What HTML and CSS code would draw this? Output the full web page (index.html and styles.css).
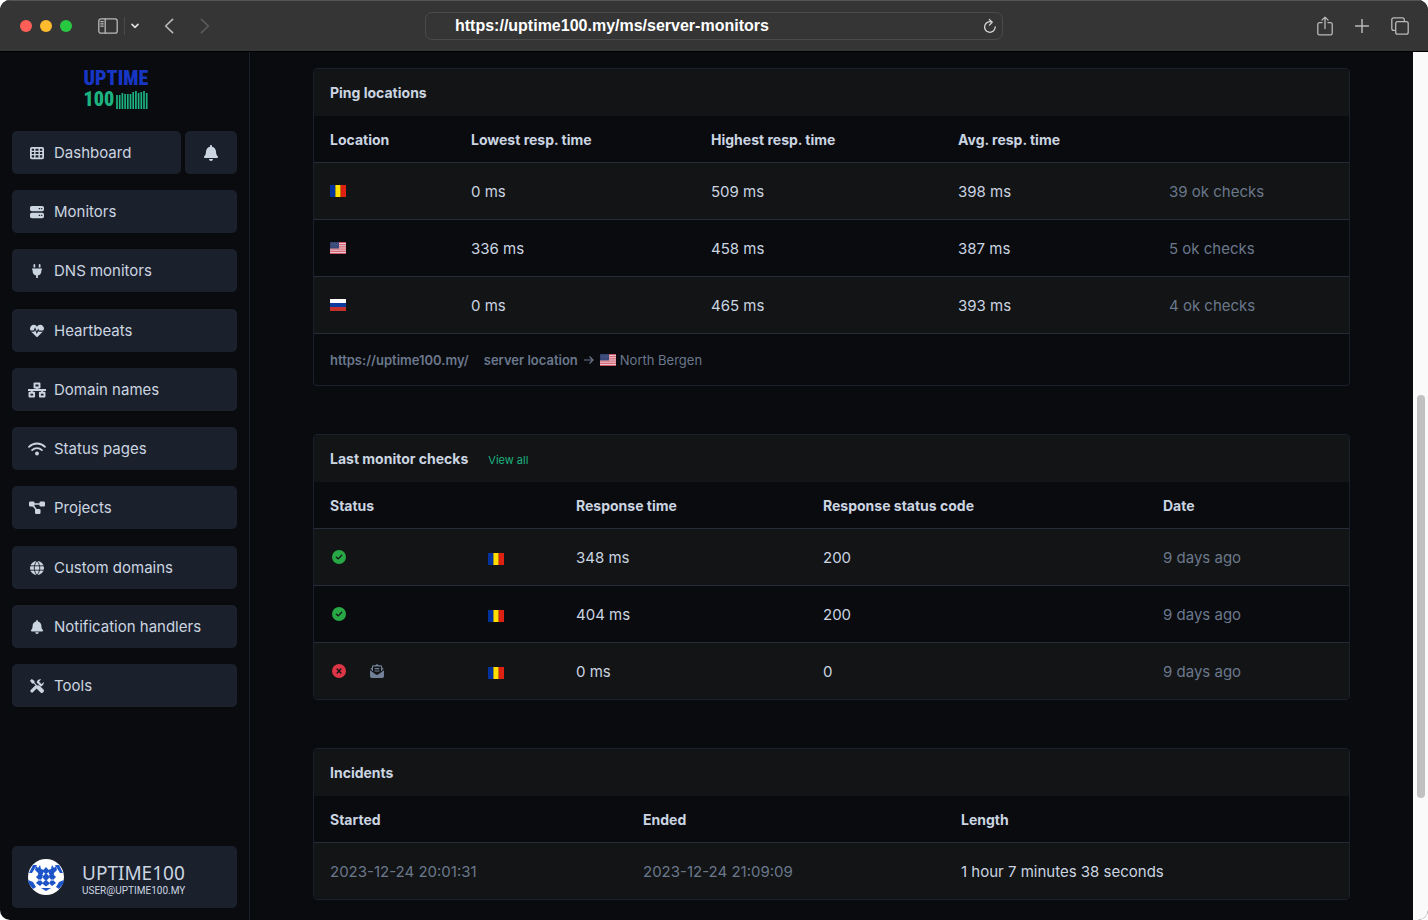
FILE: index.html
```html
<!DOCTYPE html>
<html lang="en">
<head>
  <meta charset="utf-8">
  <meta name="viewport" content="width=device-width, initial-scale=1">
  <title>Server monitors - Uptime100</title>
  <link rel="stylesheet" href="styles.css">
</head>
<body>

<!-- shared shapes -->
<svg class="defs" aria-hidden="true">
  <symbol id="bell" viewBox="0 0 448 512"><path d="M224 512c35.32 0 63.97-28.65 63.97-64H160.03c0 35.35 28.65 64 63.97 64zm215.39-149.71c-19.32-20.76-55.47-51.99-55.47-154.29 0-77.7-54.48-139.9-127.94-155.16V32c0-17.67-14.32-32-31.98-32s-31.98 14.33-31.98 32v20.84C118.56 68.1 64.08 130.3 64.08 208c0 102.3-36.15 133.53-55.47 154.29-6 6.45-8.66 14.16-8.61 21.71.11 16.4 12.98 32 32.1 32h383.8c19.12 0 32-15.6 32.1-32 .05-7.55-2.61-15.27-8.61-21.71z"/></symbol>
  <symbol id="flag-ro" viewBox="0 0 16 12"><path fill="#00319c" d="M0 0h5.4v12H0z"/><path fill="#ffde00" d="M5.4 0h5.3v12H5.4z"/><path fill="#de2110" d="M10.7 0H16v12h-5.3z"/></symbol>
  <symbol id="flag-us" viewBox="0 0 16 12">
    <path fill="#f3dfe2" d="M0 0h16v12H0z"/>
    <path stroke="#c8475a" stroke-width=".93" d="M0 .5h16M0 2.3h16M0 4.2h16M0 6h16M0 7.9h16M0 9.7h16M0 11.5h16"/>
    <path fill="#2f3f70" d="M0 0h9v6.4H0z"/>
    <path stroke="#8793b4" stroke-width=".6" stroke-dasharray=".6 1" d="M.8 1.2h8M1.6 2.5h7M.8 3.8h8M1.6 5.1h7"/>
  </symbol>
  <symbol id="flag-ru" viewBox="0 0 16 12"><path fill="#fff" d="M0 0h16v4H0z"/><path fill="#0c3ba0" d="M0 4h16v4H0z"/><path fill="#c4302c" d="M0 8h16v4H0z"/></symbol>
  <symbol id="ok" viewBox="0 0 14 14"><circle cx="7" cy="7" r="7" fill="#28a745"/><path d="M4.4 7.2l1.8 1.7 3.5-3.6" fill="none" stroke="#121415" stroke-width="1.3" stroke-linecap="round" stroke-linejoin="round"/></symbol>
  <symbol id="fail" viewBox="0 0 14 14"><circle cx="7" cy="7" r="7" fill="#dc3545"/><path d="M5.1 5.1l3.8 3.8m0-3.8L5.1 8.9" fill="none" stroke="#121415" stroke-width="1.4" stroke-linecap="round"/></symbol>
</svg>

<div class="window">
  <header class="toolbar">
    <div class="toolbar-left">
      <div class="lights"><span class="red"></span><span class="yellow"></span><span class="green"></span></div>
      <button class="tool panel" aria-label="Sidebar"><svg width="20" height="16" viewBox="0 0 20 16"><rect x=".8" y=".8" width="18.4" height="14.4" rx="2.2"/><path d="M7.2 1v14M2.8 3.6h2.4M2.8 5.9h2.4M2.8 8.2h2.4"/></svg></button>
      <button class="tool more" aria-label="More"><svg width="8" height="6" viewBox="0 0 8 6"><path d="M1 1.4l3 3 3-3" stroke="#e0e0e0" stroke-width="1.6"/></svg></button>
      <button class="tool back" aria-label="Back"><svg width="10" height="16" viewBox="0 0 10 16"><path d="M8.6 1.4L1.6 8l7 6.6" stroke-width="1.6"/></svg></button>
      <button class="tool forward" aria-label="Forward"><svg width="10" height="16" viewBox="0 0 10 16"><path d="M1.4 1.4l7 6.6-7 6.6" stroke-width="1.6"/></svg></button>
    </div>
    <div class="address">
      <input type="text" value="https://uptime100.my/ms/server-monitors" aria-label="Address">
      <button class="tool" aria-label="Reload"><svg width="14" height="16" viewBox="0 0 14 16"><path d="M9.2 4.2A5.3 5.3 0 1 0 12.2 9M6.3 1.4l2.9 2.8-2.8 2.9" stroke="#d8d8d8" stroke-width="1.3"/></svg></button>
    </div>
    <div class="toolbar-right">
      <button class="tool" aria-label="Share"><svg width="16" height="20" viewBox="0 0 16 20"><path d="M5 6.7H2.5c-1 0-1.7.7-1.7 1.6v8.9c0 1 .7 1.7 1.7 1.7h11c1 0 1.7-.7 1.7-1.7V8.300c0-.9-.7-1.600-1.700-1.600H11M8 12.500V1.200M4.900 4.100L8 1.100l3.100 3"/></svg></button>
      <button class="tool" aria-label="New tab"><svg width="14" height="14" viewBox="0 0 14 14"><path d="M7 .5v13M.5 7h13" stroke-width="1.5"/></svg></button>
      <button class="tool" aria-label="Tabs"><svg width="18" height="18" viewBox="0 0 18 18"><rect x="4.700" y="4.700" width="12.500" height="12.500" rx="2"/><path d="M4.500 13.300H2.700c-1.100 0-1.900-.8-1.900-1.900V2.700C.8 1.600 1.600.8 2.700.8h8.700c1.100 0 1.900.8 1.900 1.900v1.800"/></svg></button>
    </div>
  </header>

  <div class="page">
    <aside class="sidebar">
      <a class="logo" href="#" aria-label="Uptime 100">
        <span class="logo-top">UPTIME</span>
        <span class="logo-bottom">100<svg width="32" height="18" viewBox="0 0 32 18"><path d="M1 4v14M3.700 4v14M6.400 2v16M9.100 3v15M11.800 3v15M14.500 3v15M17.200 1v17M19.900 0v18M22.600 2v16M25.300 1v17M28 0v18M30.700 2v16" stroke="#1db380" stroke-width="1.700"/></svg></span>
      </a>
      <nav class="menu">
        <div class="menu-row">
          <a class="item" href="#"><svg viewBox="0 0 16 16"><path fill-rule="evenodd" d="M2 1h12a2 2 0 0 1 2 2v10a2 2 0 0 1-2 2H2a2 2 0 0 1-2-2V3a2 2 0 0 1 2-2zm0 2v2.300h2.700V3zm4.300 0v2.300h3.400V3zm5 0v2.300H14V3zM2 6.800v2.400h2.700V6.800zm4.300 0v2.400h3.400V6.800zm5 0v2.400H14V6.800zM2 10.700V13h2.700v-2.300zm4.300 0V13h3.400v-2.300zm5 0V13H14v-2.300z"/></svg>Dashboard</a>
          <a class="item bell" href="#" aria-label="Notifications"><svg><use href="#bell"/></svg></a>
        </div>
        <a class="item" href="#"><svg viewBox="0 0 16 16"><path fill-rule="evenodd" d="M2 1h12a2 2 0 0 1 2 2v2.200a2 2 0 0 1-2 2H2a2 2 0 0 1-2-2V3a2 2 0 0 1 2-2zm8 2.400v1.400h1.600V3.400zm2.700 0v1.400h1.400V3.400zM2 8.800h12a2 2 0 0 1 2 2V13a2 2 0 0 1-2 2H2a2 2 0 0 1-2-2v-2.200a2 2 0 0 1 2-2zm8 2.400v1.400h1.600v-1.400zm2.700 0v1.400h1.400v-1.400z"/></svg>Monitors</a>
        <a class="item" href="#"><svg viewBox="0 0 16 16"><path d="M4 1a1 1 0 0 1 2 0v3H4zM10 1a1 1 0 0 1 2 0v3h-2zM3 5h10a.9.9 0 0 1 0 1.800v1.400a5 5 0 0 1-4 4.800v3H7v-3a5 5 0 0 1-4-4.800V6.800A.9.900 0 0 1 3 5z"/></svg>DNS monitors</a>
        <a class="item" href="#"><svg viewBox="0 0 512 512"><path d="M462.300 62.600C407.500 15.900 326 24.300 275.700 76.200L256 96.500l-19.700-20.300C186.100 24.300 104.500 15.900 49.700 62.600c-62.800 53.600-66.100 149.800-9.900 207.900l193.500 199.800c12.500 12.900 32.800 12.900 45.300 0l193.500-199.800c56.300-58.100 53-154.300-9.800-207.900z"/><path d="M0 262h142l42-92 66 150 50-112 28 54h184" fill="none" stroke="#1b212c" stroke-width="40"/></svg>Heartbeats</a>
        <a class="item" href="#"><svg class="wide" viewBox="0 0 18 16"><path d="M6.500 1.500h5v4h-5zM1.500 10.800h4.600v3.700H1.500zM11.900 10.800h4.600v3.700h-4.600zM0 8h18M9 5.500V8M3.800 8v2.800M14.200 8v2.800" fill="none" stroke="currentColor" stroke-width="1.900" stroke-linejoin="round"/></svg>Domain names</a>
        <a class="item" href="#"><svg class="wide" viewBox="0 0 18 16"><path d="M1 5.800c4.500-4.400 11.500-4.400 16 0M4.100 9.100c2.800-2.600 7-2.600 9.800 0" fill="none" stroke="currentColor" stroke-width="1.800" stroke-linecap="round"/><circle cx="9" cy="12.500" r="1.900"/></svg>Status pages</a>
        <a class="item" href="#"><svg class="wide" viewBox="0 0 18 16"><rect x="1" y="1.500" width="5.500" height="5" rx="1.300"/><rect x="11.500" y="1.500" width="5.500" height="5" rx="1.300"/><rect x="7" y="9" width="5.500" height="5" rx="1.300"/><path d="M6 4h7M5 5.500l4 5" stroke="currentColor" stroke-width="1.500"/></svg>Projects</a>
        <a class="item" href="#"><svg viewBox="0 0 16 16"><circle cx="8" cy="8" r="8"/><path d="M0 5.500h16M0 10.500h16M8 0C3.800 4 3.800 12 8 16M8 0c4.200 4 4.200 12 0 16" fill="none" stroke="#1b212c" stroke-width="1"/></svg>Custom domains</a>
        <a class="item" href="#"><svg><use href="#bell"/></svg>Notification handlers</a>
        <a class="item" href="#"><svg viewBox="0 0 16 16"><path d="M2.300 13.700l8.200-8.200" stroke="currentColor" stroke-width="3.600" stroke-linecap="round"/><path d="M15.700 3.400l-2.400 2.300-2.200-.6-.6-2.200L12.800.4A4.500 4.500 0 0 0 7.600 6l2.600 2.500A4.500 4.500 0 0 0 15.700 3.400z"/><path d="M1.500 2.200l3.200 1 6 6" fill="none" stroke="#1b212c" stroke-width="3"/><path d="M2 0l3.200 2.300v1.900l3.200 3.200c1-.4 2.100-.2 2.900.6l4.100 4.100c.8.800.8 1.900 0 2.700l-.6.600c-.8.800-1.900.8-2.700 0L8 11.300c-.8-.8-1-1.900-.5-2.900L4.300 5.200H2.400L0 2z"/></svg>Tools</a>
      </nav>
      <a class="user" href="#">
        <svg class="avatar" viewBox="0 0 36 36">
          <circle cx="18" cy="18" r="18" fill="#fff"/>
          <g fill="#1d55c8">
            <path d="M18 8l3.500 4L18 15.500 14.500 12zM18 14l4 4-4 4-4-4zM12 14l-4 4 4 4 3-4zM24 14l4 4-4 4-3-4zM18 20.500l4 4-4 3-4-3zM12 20l3 4-3 3-4-3zM24 20l-3 4 3 3 4-3z"/>
            <path d="M8 7l2 2 2-3 1 4 3 1-1 4-4 0-4-4zM28 7l-2 2-2-3-1 4-3 1 1 4h4l4-4zM10 14l4 0 1 3-4 1zM26 14h-4l-1 3 4 1z"/>
            <path d="M5 6l4 0-5 8-3 0zM31 6h-4l5 8h3zM0 21l5 2 3 5-3 2-4-5zM36 21l-5 2-3 5 3 2 4-5zM13 29h10l-5 3z"/>
          </g>
        </svg>
        <span class="user-text"><span class="user-name">UPTIME100</span><span class="user-mail">USER@UPTIME100.MY</span></span>
      </a>
    </aside>

    <main class="content">
      <section class="card">
        <h2>Ping locations</h2>
        <table class="ping">
          <colgroup><col class="c1"><col class="c2"><col class="c3"><col class="c4"><col class="c5"></colgroup>
          <thead>
            <tr><th>Location</th><th>Lowest resp. time</th><th>Highest resp. time</th><th>Avg. resp. time</th><th></th></tr>
          </thead>
          <tbody>
            <tr><td><svg class="flag"><use href="#flag-ro"/></svg></td><td>0 ms</td><td>509 ms</td><td>398 ms</td><td class="muted">39 ok checks</td></tr>
            <tr><td><svg class="flag"><use href="#flag-us"/></svg></td><td>336 ms</td><td>458 ms</td><td>387 ms</td><td class="muted">5 ok checks</td></tr>
            <tr><td><svg class="flag"><use href="#flag-ru"/></svg></td><td>0 ms</td><td>465 ms</td><td>393 ms</td><td class="muted">4 ok checks</td></tr>
          </tbody>
        </table>
        <div class="card-foot">
          <b>https://uptime100.my/</b>
          <span class="server"><b>server location</b><svg class="arrow" viewBox="0 0 10 10"><path d="M0 5h9M5.500 1.500L9 5 5.500 8.500" fill="none" stroke="currentColor" stroke-width="1.200"/></svg><svg class="flag"><use href="#flag-us"/></svg>North Bergen</span>
        </div>
      </section>

      <section class="card">
        <h2>Last monitor checks <a href="#">View all</a></h2>
        <table class="checks">
          <colgroup><col class="c1"><col class="c2"><col class="c3"><col class="c4"><col class="c5"></colgroup>
          <thead>
            <tr><th>Status</th><th></th><th>Response time</th><th>Response status code</th><th>Date</th></tr>
          </thead>
          <tbody>
            <tr><td><svg class="state"><use href="#ok"/></svg></td><td><svg class="flag"><use href="#flag-ro"/></svg></td><td>348 ms</td><td>200</td><td class="muted">9 days ago</td></tr>
            <tr><td><svg class="state"><use href="#ok"/></svg></td><td><svg class="flag"><use href="#flag-ro"/></svg></td><td>404 ms</td><td>200</td><td class="muted">9 days ago</td></tr>
            <tr><td><svg class="state"><use href="#fail"/></svg><svg class="mail" viewBox="0 0 16 16"><path d="M0 7.200l6.700 4.700c.8.500 1.800.500 2.600 0L16 7.200V14a2 2 0 0 1-2 2H2a2 2 0 0 1-2-2z"/><path d="M2.800 8V3.200c0-.6.400-1 1-1h8.400c.6 0 1 .4 1 1V8M5.300 5.300h5.400M5.300 8h5.400M.8 6l2-1.600M15.200 6l-2-1.600M6.300 1.900L8 .8l1.700 1.100" fill="none" stroke="currentColor" stroke-width="1.300"/></svg></td><td><svg class="flag"><use href="#flag-ro"/></svg></td><td>0 ms</td><td>0</td><td class="muted">9 days ago</td></tr>
          </tbody>
        </table>
      </section>

      <section class="card">
        <h2>Incidents</h2>
        <table class="incidents">
          <colgroup><col class="c1"><col class="c2"><col class="c3"></colgroup>
          <thead>
            <tr><th>Started</th><th>Ended</th><th>Length</th></tr>
          </thead>
          <tbody>
            <tr><td class="muted">2023-12-24 20:01:31</td><td class="muted">2023-12-24 21:09:09</td><td>1 hour 7 minutes 38 seconds</td></tr>
          </tbody>
        </table>
      </section>
    </main>

    <div class="scrollbar"><div class="thumb"></div></div>
  </div>
</div>

</body>
</html>
```
FILE: styles.css
```css
* {
  box-sizing: border-box;
}
html {
  background: #fff;
}
body {
  margin: 0;
  font-family: Inter, "Liberation Sans", sans-serif;
  font-size: 15px;
  line-height: 24px;
  color: #cbd5e1;
}
a {
  color: inherit;
  text-decoration: none;
}
svg {
  flex: none;
  fill: currentColor;
}
.defs {
  position: absolute;
  width: 0;
  height: 0;
}
.window {
  display: flex;
  flex-direction: column;
  height: 100vh;
  overflow: hidden;
  border-radius: 10px;
  background: #090b0f;
}

/* browser toolbar */
.toolbar {
  display: grid;
  grid-template-columns: 1fr minmax(0, 578px) 1fr;
  align-items: center;
  flex: none;
  height: 52px;
  background: #353535;
  border-top: 1px solid #555;
  border-bottom: 1px solid #000;
}
.toolbar-left,
.toolbar-right,
.lights {
  display: flex;
  align-items: center;
}
.toolbar-left {
  padding-left: 20px;
}
.toolbar-right {
  justify-content: flex-end;
  gap: 22px;
  padding-right: 19px;
}
.lights {
  gap: 8px;
}
.lights span {
  width: 12px;
  height: 12px;
  border-radius: 50%;
}
.red { background: #ff5f57; }
.yellow { background: #febc2e; }
.green { background: #28c840; }
.tool {
  display: flex;
  padding: 0;
  border: 0;
  background: none;
  color: #b9b9b9;
}
.tool svg {
  fill: none;
  stroke: currentColor;
  stroke-width: 1.3;
  stroke-linecap: round;
  stroke-linejoin: round;
}
.panel {
  margin-left: 26px;
}
.more {
  align-items: center;
  height: 18px;
  margin-left: 6px;
  padding-left: 6px;
  border-left: 1px solid #4a4a4a;
}
.back {
  margin-left: 25px;
}
.forward {
  margin-left: 26px;
  color: #5c5c5c;
}
.address {
  display: flex;
  align-items: center;
  height: 28px;
  padding: 0 5px 0 29px;
  border: 1px solid #4b4b4b;
  border-radius: 7px;
}
.address input {
  flex: 1;
  min-width: 0;
  padding: 0;
  border: 0;
  outline: 0;
  background: none;
  color: #fff;
  font: bold 16px "Liberation Sans", Arial, sans-serif;
}

.page {
  display: flex;
  flex: 1;
  min-height: 0;
}

/* sidebar */
.sidebar {
  display: flex;
  flex-direction: column;
  flex: none;
  width: 250px;
  padding: 16px 12px 12px;
  border-right: 1px solid #1b212c;
}
.logo {
  align-self: center;
  display: flex;
  flex-direction: column;
  width: 64px;
  height: 43px;
  margin: 0 18px 20px 0;
  font: 900 20px/21px "Roboto Condensed", Roboto, sans-serif;
}
.logo-top {
  color: #1736c4;
}
.logo-bottom {
  display: flex;
  align-items: center;
  justify-content: space-between;
  color: #1db380;
}
.menu {
  display: flex;
  flex-direction: column;
  justify-content: space-between;
  min-height: 576px;
}
.menu-row {
  display: flex;
  gap: 4px;
}
.menu-row .item:first-child {
  flex: 1;
}
.item {
  display: flex;
  align-items: center;
  gap: 8px;
  height: 43px;
  padding: 1px 16px 0;
  border-radius: 5px;
  background: #1b212c;
}
.item svg {
  width: 18px;
  height: 14px;
}
.item .wide {
  height: 16px;
}
.item.bell {
  justify-content: center;
  width: 52px;
}
.item.bell svg {
  height: 16px;
}
.user {
  display: flex;
  align-items: center;
  gap: 18px;
  height: 62px;
  margin-top: auto;
  padding: 0 16px;
  border-radius: 5px;
  background: #1b212c;
}
.avatar {
  width: 36px;
  height: 36px;
}
.user-text {
  display: flex;
  flex-direction: column;
  padding-top: 4px;
}
.user-name {
  font: 19px/24px "Noto Sans", sans-serif;
}
.user-mail {
  font: 10px/12px Roboto, sans-serif;
}

/* cards */
.content {
  flex: 1;
  min-width: 0;
  display: flex;
  flex-direction: column;
  gap: 48px;
  padding: 16px 63px;
}
.card {
  flex: none;
  overflow: hidden;
  border: 1px solid #1b212c;
  border-radius: 4px;
}
.card h2 {
  display: flex;
  align-items: center;
  gap: 20px;
  height: 47px;
  margin: 0;
  padding: 0 16px;
  background: #121415;
  font-size: 14px;
  font-weight: 700;
}
.card h2 a {
  padding-top: 2px;
  color: #1db380;
  font-size: 11px;
  font-weight: 400;
}
table {
  width: 100%;
  table-layout: fixed;
  border-collapse: separate;
  border-spacing: 0;
}
th,
td {
  padding: 2px 16px 0;
  text-align: left;
  border-bottom: 1px solid #272c3a;
}
th {
  height: 47px;
  font-size: 14px;
  font-weight: 700;
}
td {
  height: 57px;
}
tbody tr:nth-child(odd) {
  background: #121415;
}
.checks tr:last-child td,
.incidents tr:last-child td {
  height: 56px;
  border-bottom: 0;
}
.checks thead th,
.incidents thead th {
  border-bottom: 1px solid #272c3a;
}
.muted {
  color: #6b788c;
}
.ping .c1 { width: 141px; }
.ping .c2 { width: 240px; }
.ping .c3 { width: 247px; }
.ping .c4 { width: 211px; }
.ping .c5 { width: 196px; }
.checks .c1 { width: 158px; }
.checks .c2 { width: 88px; }
.checks .c3 { width: 247px; }
.checks .c4 { width: 340px; }
.checks .c5 { width: 202px; }
.incidents .c1 { width: 313px; }
.incidents .c2 { width: 318px; }
.incidents .c3 { width: 404px; }
td svg {
  display: inline-block;
  vertical-align: middle;
}
.ping td:first-child,
.checks td:first-child {
  padding: 0 16px 2px;
}
.flag {
  width: 16px;
  height: 12px;
}
.state {
  width: 14px;
  height: 14px;
  margin-left: 2px;
}
.mail {
  width: 14px;
  height: 14px;
  margin-left: 24px;
  color: #718096;
}
.card-foot {
  display: flex;
  align-items: center;
  gap: 15px;
  height: 51px;
  padding: 0 16px;
  font-size: 13px;
  color: #6b788c;
}
.card-foot b {
  font-weight: 600;
}
.server {
  display: flex;
  align-items: center;
  gap: 4px;
}
.arrow {
  width: 10px;
  height: 10px;
  margin: 0 2px;
}

.scrollbar {
  flex: none;
  width: 15px;
  padding: 343px 3px 0 4px;
  background: #fafafa;
}
.thumb {
  height: 403px;
  border-radius: 4px;
  background: #c1c1c1;
}
```
